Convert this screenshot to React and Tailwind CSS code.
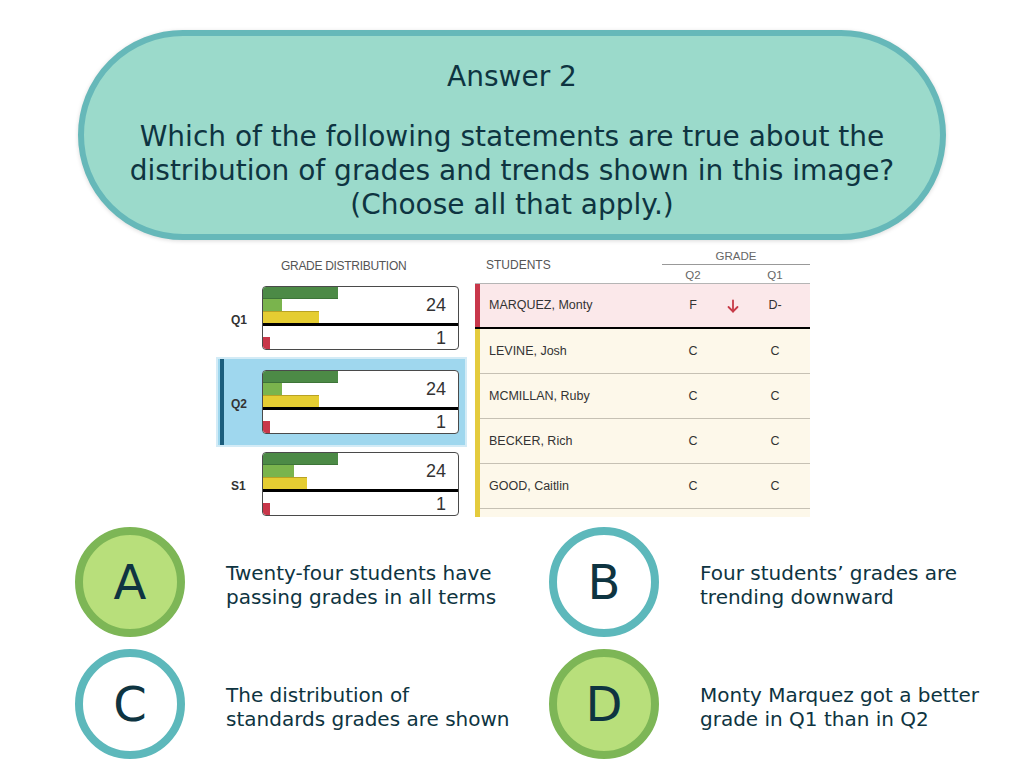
import React from "react";

const SANS = { fontFamily: '"Liberation Sans", Arial, sans-serif' };

function DistCard({ lg, yl }) {
  return (
    <div className="w-[197px] h-[64px] border border-[#4a4a4a] rounded-[4px] bg-white overflow-hidden flex flex-col">
      <div className="h-[36px] flex">
        <div className="flex-1 flex flex-col">
          <div className="h-[12px] w-[75px] bg-[#4c8a46] border-b border-[#3d7438]" />
          <div className={`h-[12px] bg-[#7ab44d] ${lg}`} />
          <div className={`h-[12px] bg-[#e5cd32] border-t border-[#b9a224] ${yl}`} />
        </div>
        <div className="pr-[12px] pt-[8px] text-[18px] leading-[20px] text-[#333]">24</div>
      </div>
      <div className="h-[3px] bg-black" />
      <div className="flex-1 flex items-end justify-between">
        <div className="w-[7px] h-[12px] bg-[#c8374a] rounded-bl-[3px]" />
        <div className="pr-[12px] self-center text-[18px] leading-[20px] text-[#333]">1</div>
      </div>
    </div>
  );
}

function Row({ name, q2, q1, arrow, h = "h-[44px]" }) {
  return (
    <div className={`${h} flex items-center text-[12.5px] text-[#333]`}>
      <div className="w-[198px] pl-[9px]">{name}</div>
      <div className="w-[30px] text-center">{q2}</div>
      <div className="w-[50px] flex justify-center">
        {arrow && (
          <svg width="12" height="14" viewBox="0 0 12 14" fill="none" stroke="#c73a48" strokeWidth="1.8" strokeLinecap="round" strokeLinejoin="round">
            <path d="M6 1.5V12.5" />
            <path d="M1.5 8L6 12.5L10.5 8" />
          </svg>
        )}
      </div>
      <div className="w-[34px] text-center">{q1}</div>
      <div className="flex-1" />
    </div>
  );
}

function Circle({ letter, filled }) {
  return (
    <div
      className={`w-[110px] h-[110px] shrink-0 rounded-full border-[8px] flex items-center justify-center text-[48px] text-[#0e3441] ${
        filled ? "border-[#7db656] bg-[#b8df7b]" : "border-[#5db8bb] bg-white"
      }`}
    >
      {letter}
    </div>
  );
}

function Answer({ letter, filled, lines }) {
  return (
    <div className="flex items-center">
      <Circle letter={letter} filled={filled} />
      <div className="ml-[41px] mt-[6px] text-[20px] leading-[24px] text-[#0e3441]">
        {lines.map((l, i) => (
          <div key={i}>{l}</div>
        ))}
      </div>
    </div>
  );
}

export default function App() {
  return (
    <div className="w-[1024px] h-[768px] bg-white overflow-hidden" style={{ fontFamily: '"DejaVu Sans", Verdana, sans-serif' }}>
      {/* Question pill */}
      <div className="pt-[30px] flex justify-center">
        <div className="w-[868px] h-[210px] rounded-full border-[6px] border-[#66b8b9] bg-[#9bdacb] shadow-[0_1px_4px_rgba(0,0,0,0.15)] flex flex-col items-center text-[#0e3441] text-[28px] leading-[34px] text-center pt-[24px]">
          <div>Answer 2</div>
          <div className="mt-[26px]">
            <div>Which of the following statements are true about the</div>
            <div>distribution of grades and trends shown in this image?</div>
            <div>(Choose all that apply.)</div>
          </div>
        </div>
      </div>

      {/* Screenshot */}
      <div className="mt-[5px] ml-[215px] flex" style={SANS}>
        {/* Grade distribution */}
        <div className="w-[252px] flex flex-col">
          <div className="h-[41px] pl-[66px] pt-[14px] text-[12px] leading-[14px] text-[#555] tracking-[-0.3px]">GRADE DISTRIBUTION</div>
          <div className="flex items-center">
            <div className="w-[47px] pl-[16px] pt-[3px] text-[12px] font-bold text-[#333]">Q1</div>
            <DistCard lg="w-[19px]" yl="w-[56px]" />
          </div>
          <div className="mt-[7px] ml-[1px] w-[251px] h-[90px] border-2 border-[#d3ebf6] bg-[#9fd7ee] flex items-stretch">
            <div className="w-[4px] ml-[2px] bg-[#1b5d7c]" />
            <div className="w-[38px] pl-[7px] pt-[3px] flex items-center text-[12px] font-bold text-[#333]">Q2</div>
            <div className="flex items-center">
              <DistCard lg="w-[19px]" yl="w-[56px]" />
            </div>
          </div>
          <div className="mt-[5px] flex items-center">
            <div className="w-[47px] pl-[16px] pt-[3px] text-[12px] font-bold text-[#333]">S1</div>
            <DistCard lg="w-[31px]" yl="w-[44px]" />
          </div>
        </div>

        {/* Students table */}
        <div className="ml-[8px] w-[335px] flex flex-col">
          <div className="h-[39px] flex border-b border-[#b5b5b5]">
            <div className="w-[187px] pl-[11px] pt-[14px] text-[12px] leading-[12px] text-[#555]">STUDENTS</div>
            <div className="w-[148px] flex flex-col text-[11.5px] leading-[12px] text-[#666]">
              <div className="h-[20px] pt-[5px] text-center border-b border-[#999]">GRADE</div>
              <div className="flex pt-[4px]">
                <div className="w-[16px]" />
                <div className="w-[30px] text-center">Q2</div>
                <div className="w-[50px]" />
                <div className="w-[34px] text-center">Q1</div>
              </div>
            </div>
          </div>
          <div className="flex bg-[#fbe8ea]">
            <div className="w-[5px] bg-[#c8374a]" />
            <div className="flex-1">
              <Row name="MARQUEZ, Monty" q2="F" q1="D-" arrow h="h-[43px]" />
            </div>
          </div>
          <div className="h-[2px] bg-black" />
          <div className="flex bg-[#fdf8ea]">
            <div className="w-[5px] bg-[#e4cb3d]" />
            <div className="flex-1 flex flex-col">
              <Row name="LEVINE, Josh" q2="C" q1="C" />
              <div className="h-px bg-[#c6c1b4]" />
              <Row name="MCMILLAN, Ruby" q2="C" q1="C" />
              <div className="h-px bg-[#c6c1b4]" />
              <Row name="BECKER, Rich" q2="C" q1="C" />
              <div className="h-px bg-[#c6c1b4]" />
              <Row name="GOOD, Caitlin" q2="C" q1="C" />
              <div className="h-px bg-[#c6c1b4]" />
              <div className="h-[8px]" />
            </div>
          </div>
        </div>
      </div>

      {/* Answers */}
      <div className="mt-[10px] ml-[75px] grid grid-cols-[474px_474px] gap-y-[12px]">
        <Answer letter="A" filled lines={["Twenty-four students have", "passing grades in all terms"]} />
        <Answer letter="B" lines={["Four students’ grades are", "trending downward"]} />
        <Answer letter="C" lines={["The distribution of", "standards grades are shown"]} />
        <Answer letter="D" filled lines={["Monty Marquez got a better", "grade in Q1 than in Q2"]} />
      </div>
    </div>
  );
}
